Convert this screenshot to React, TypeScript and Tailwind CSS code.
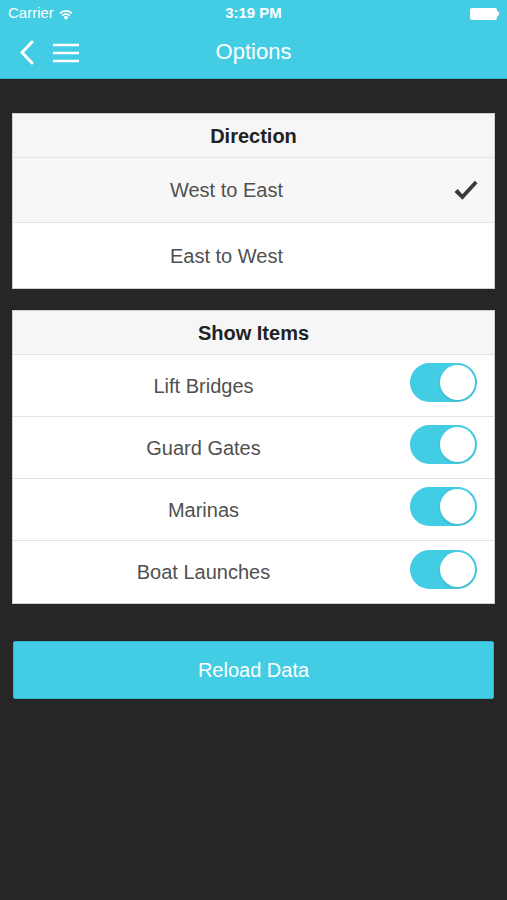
import { useState } from 'react';

const ITEMS = ['Lift Bridges', 'Guard Gates', 'Marinas', 'Boat Launches'];

function Toggle({ on, onClick }: { on: boolean; onClick: () => void }) {
  return (
    <button
      onClick={onClick}
      className={`relative w-[67px] h-[39px] rounded-full border-2 transition-colors ${
        on ? 'bg-[#43cde4] border-[#43cde4]' : 'bg-white border-[#e5e5e5]'
      }`}
    >
      <span
        className={`absolute top-0 w-[35px] h-[35px] rounded-full bg-white shadow-sm transition-all ${
          on ? 'right-0' : 'left-0'
        }`}
      />
    </button>
  );
}

export default function App() {
  const [direction, setDirection] = useState<'we' | 'ew'>('we');
  const [shown, setShown] = useState<boolean[]>([true, true, true, true]);

  return (
    <div
      className="min-h-[900px] bg-[#262626]"
      style={{ fontFamily: '"Liberation Sans", Arial, sans-serif' }}
    >
      {/* Header */}
      <header className="bg-[#43cde4] border-b border-[#2fb4ca]">
        <div className="h-[27px] px-2 flex items-center text-white text-[15px]">
          <div className="flex-1 flex items-center gap-1">
            <span>Carrier</span>
            <svg width="16" height="12" viewBox="0 0 16 12" fill="white">
              <path d="M8 12 L5.6 9.2 A3.4 3.4 0 0 1 10.4 9.2 Z" />
              <path d="M3.6 7 A6.2 6.2 0 0 1 12.4 7 L11.2 8.3 A4.5 4.5 0 0 0 4.8 8.3 Z" />
              <path d="M1.4 4.6 A9.4 9.4 0 0 1 14.6 4.6 L13.4 5.9 A7.6 7.6 0 0 0 2.6 5.9 Z" />
            </svg>
          </div>
          <span className="font-bold">3:19 PM</span>
          <div className="flex-1 flex justify-end">
            <div className="flex items-center">
              <div className="w-[27px] h-[12px] rounded-[2px] bg-white" />
              <div className="w-[2px] h-[5px] bg-white rounded-r-sm" />
            </div>
          </div>
        </div>
        <div className="h-[51px] relative flex items-center justify-center">
          <div className="absolute left-[19px] top-[13px] flex items-center gap-[18px]">
            <svg width="16" height="25" viewBox="0 0 16 25" fill="none" stroke="white" strokeWidth="3" strokeLinecap="round" strokeLinejoin="round">
              <path d="M13 2 L3 12.5 L13 23" />
            </svg>
            <svg width="26" height="20" viewBox="0 0 26 20" fill="none" stroke="white" strokeWidth="2.4">
              <path d="M0 2 H26 M0 10 H26 M0 18 H26" />
            </svg>
          </div>
          <h1 className="text-white text-[22px] -mt-[2px]">Options</h1>
        </div>
      </header>

      <main className="pt-[34px] px-[12px]">
        {/* Direction */}
        <section className="bg-white border border-[#cfcfcf]">
          <div className="h-[44px] bg-[#f6f6f6] border-b border-[#e3e3e3] flex items-center justify-center text-[20px] font-bold text-[#222]">
            Direction
          </div>
          {[
            { key: 'we' as const, label: 'West to East' },
            { key: 'ew' as const, label: 'East to West' },
          ].map((d, i) => (
            <button
              key={d.key}
              onClick={() => setDirection(d.key)}
              className={`w-full h-[65px] flex items-center text-[20px] text-[#505050] ${
                i === 0 ? 'border-b border-[#e3e3e3]' : ''
              } ${direction === d.key ? 'bg-[#f7f7f7]' : 'bg-white'}`}
            >
              <span className="flex-1 text-center">{d.label}</span>
              <span className="w-[54px] flex justify-end pr-[16px]">
                {direction === d.key && (
                  <svg width="24" height="21" viewBox="0 0 26 22" fill="#3a3a3a">
                    <path d="M0.5 12.5 L4 9.5 L9 15 L22.5 0.5 L25.5 3.2 L9.2 21 Z" />
                  </svg>
                )}
              </span>
            </button>
          ))}
        </section>

        {/* Show Items */}
        <section className="mt-[21px] bg-white border border-[#cfcfcf]">
          <div className="h-[44px] bg-[#f6f6f6] border-b border-[#e3e3e3] flex items-center justify-center text-[20px] font-bold text-[#222]">
            Show Items
          </div>
          {ITEMS.map((item, i) => (
            <div
              key={item}
              className={`h-[62px] flex items-center text-[20px] text-[#505050] ${
                i < ITEMS.length - 1 ? 'border-b border-[#e3e3e3]' : ''
              }`}
            >
              <span className="flex-1 text-center">{item}</span>
              <div className="w-[100px] pl-[16px]">
                <Toggle
                  on={shown[i]}
                  onClick={() =>
                    setShown((prev) => prev.map((v, j) => (j === i ? !v : v)))
                  }
                />
              </div>
            </div>
          ))}
        </section>

        <button className="mt-[37px] w-full h-[58px] ml-px bg-[#43cde4] border border-[#2fb4ca] rounded-[2px] text-white text-[20px] max-w-[481px]">
          Reload Data
        </button>
      </main>
    </div>
  );
}
